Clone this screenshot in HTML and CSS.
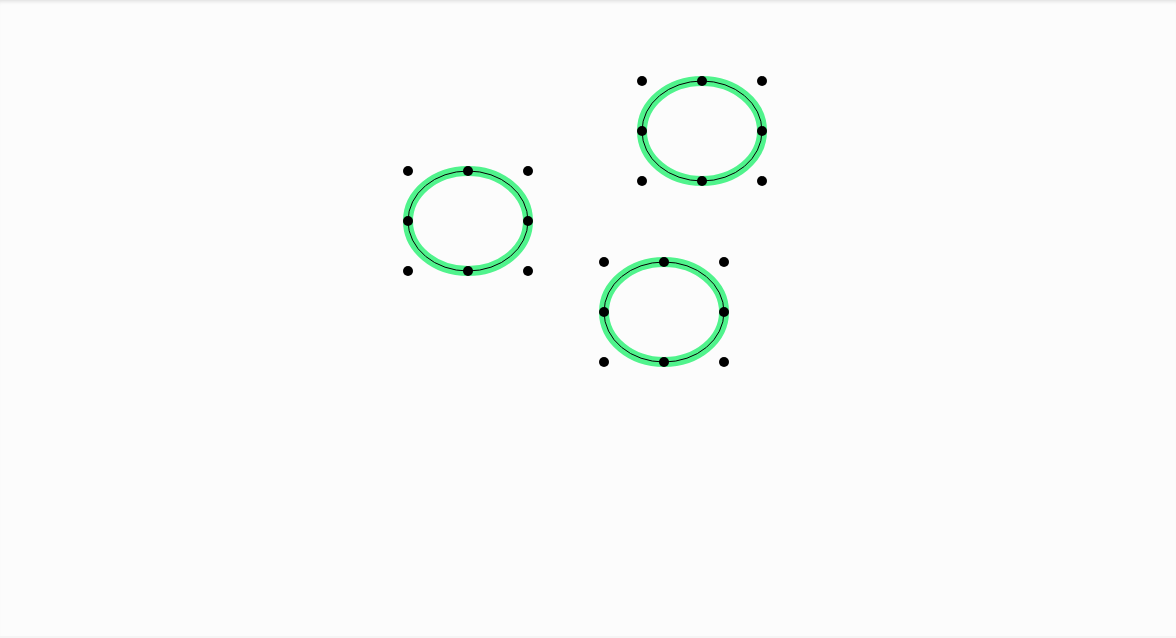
FILE: index.html
```html
<!DOCTYPE html>
<html lang="en">
<head>
    <meta charset="UTF-8">
    <meta name="viewport" content="width=device-width, initial-scale=1.0">
    <title>Ellipses</title>
    <link rel="stylesheet" href="styles.css">
</head>
<body>
    <div class="canvas">
        <svg class="board" width="1176" height="636" viewBox="0 0 1176 636">
            <!-- ellipse 1 -->
            <g class="shape">
                <ellipse class="halo" cx="468" cy="221" rx="60" ry="50"/>
                <ellipse class="line" cx="468" cy="221" rx="60" ry="50"/>
                <circle class="handle" cx="408" cy="171" r="5"/>
                <circle class="handle" cx="468" cy="171" r="5"/>
                <circle class="handle" cx="528" cy="171" r="5"/>
                <circle class="handle" cx="408" cy="221" r="5"/>
                <circle class="handle" cx="528" cy="221" r="5"/>
                <circle class="handle" cx="408" cy="271" r="5"/>
                <circle class="handle" cx="468" cy="271" r="5"/>
                <circle class="handle" cx="528" cy="271" r="5"/>
            </g>
            <!-- ellipse 2 -->
            <g class="shape">
                <ellipse class="halo" cx="702" cy="131" rx="60" ry="50"/>
                <ellipse class="line" cx="702" cy="131" rx="60" ry="50"/>
                <circle class="handle" cx="642" cy="81" r="5"/>
                <circle class="handle" cx="702" cy="81" r="5"/>
                <circle class="handle" cx="762" cy="81" r="5"/>
                <circle class="handle" cx="642" cy="131" r="5"/>
                <circle class="handle" cx="762" cy="131" r="5"/>
                <circle class="handle" cx="642" cy="181" r="5"/>
                <circle class="handle" cx="702" cy="181" r="5"/>
                <circle class="handle" cx="762" cy="181" r="5"/>
            </g>
            <!-- ellipse 3 -->
            <g class="shape">
                <ellipse class="halo" cx="664" cy="312" rx="60" ry="50"/>
                <ellipse class="line" cx="664" cy="312" rx="60" ry="50"/>
                <circle class="handle" cx="604" cy="262" r="5"/>
                <circle class="handle" cx="664" cy="262" r="5"/>
                <circle class="handle" cx="724" cy="262" r="5"/>
                <circle class="handle" cx="604" cy="312" r="5"/>
                <circle class="handle" cx="724" cy="312" r="5"/>
                <circle class="handle" cx="604" cy="362" r="5"/>
                <circle class="handle" cx="664" cy="362" r="5"/>
                <circle class="handle" cx="724" cy="362" r="5"/>
            </g>
        </svg>
    </div>
</body>
</html>
```

FILE: styles.css
```css
html, body {
    margin: 0;
    padding: 0;
    height: 100%;
    background-color: #f5f5f5;
    overflow: hidden;
}

.canvas {
    height: 636px;
    background-color: #fcfcfc;
    box-shadow: inset 0 4px 4px -3px rgba(0, 0, 0, 0.14);
}

.board {
    display: block;
}

.halo {
    fill: none;
    stroke: #50f38c;
    stroke-width: 10;
}

.line {
    fill: none;
    stroke: #000;
    stroke-width: 1;
}

.handle {
    fill: #000;
}
```
